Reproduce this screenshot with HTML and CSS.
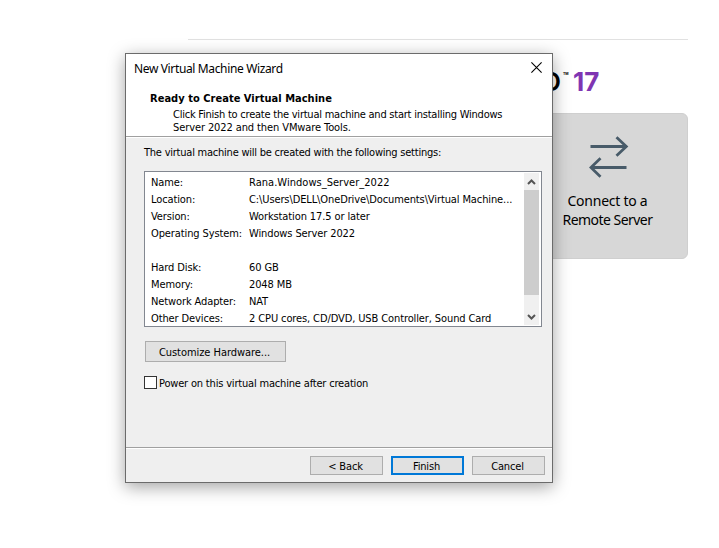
FILE: index.html
```
<!DOCTYPE html>
<html lang="en">
<head>
<meta charset="utf-8">
<title>New Virtual Machine Wizard</title>
<link rel="stylesheet" href="styles.css">
</head>
<body>
<main class="home">
  <div class="brand">
    <span class="brand-pro">O</span><span class="brand-tm">TM</span><span class="brand-version">17</span>
  </div>
  <div class="card">
    <svg class="card-icon" width="40" height="42" viewBox="0 0 40 42" fill="none" stroke="#485b69" stroke-width="2.8">
      <path d="M1.5 10.5H37.5M27.5 1.2L37.3 10.5L27.5 19.8M37.5 31.5H2M11.5 22.2L1.9 31.5L11.5 40.8"/>
    </svg>
    <span class="card-line">Connect to a</span>
    <span class="card-line remote">Remote Server</span>
  </div>
</main>

<section class="dialog">
  <header class="head">
    <div class="titlebar">
      <span class="title">New Virtual Machine Wizard</span>
      <svg class="close" width="11" height="11" viewBox="0 0 11 11" stroke="#000" stroke-width="1.1"><path d="M.4 .4L10.6 10.6M10.6 .4L.4 10.6"/></svg>
    </div>
    <h1>Ready to Create Virtual Machine</h1>
    <p><span class="tight">Click Finish to create the virtual machine and start installing Windows</span><br><span class="snug">Server 2022 and then VMware Tools.</span></p>
  </header>
  <div class="body">
    <div class="intro tight">The virtual machine will be created with the following settings:</div>
    <div class="list">
      <dl>
        <div><dt>Name:</dt><dd class="wide">Rana.Windows_Server_2022</dd></div>
        <div><dt>Location:</dt><dd>C:\Users\DELL\OneDrive\Documents\Virtual Machine...</dd></div>
        <div><dt>Version:</dt><dd>Workstation 17.5 or later</dd></div>
        <div><dt>Operating System:</dt><dd>Windows Server 2022</dd></div>
        <div class="gap"><dt>Hard Disk:</dt><dd>60 GB</dd></div>
        <div><dt>Memory:</dt><dd>2048 MB</dd></div>
        <div><dt>Network Adapter:</dt><dd>NAT</dd></div>
        <div><dt>Other Devices:</dt><dd>2 CPU cores, CD/DVD, USB Controller, Sound Card</dd></div>
      </dl>
      <div class="scroll">
        <svg width="15" height="17" viewBox="0 0 15 17" fill="none" stroke="#555" stroke-width="2"><path d="M4 11L7.5 7.5L11 11"/></svg>
        <div class="thumb"></div>
        <svg class="down" width="15" height="17" viewBox="0 0 15 17" fill="none" stroke="#555" stroke-width="2"><path d="M4 7L7.5 10.5L11 7"/></svg>
      </div>
    </div>
    <button class="btn customize">Customize Hardware...</button>
    <label class="check"><i class="box"></i><span>Power on this virtual machine after creation</span></label>
  </div>
  <footer class="foot">
    <button class="btn">&lt; Back</button>
    <button class="btn primary">Finish</button>
    <button class="btn">Cancel</button>
  </footer>
</section>
</body>
</html>
```
FILE: styles.css
```
* { box-sizing: border-box; }
body {
  margin: 0;
  height: 548px;
  overflow: hidden;
  background: #fff;
  color: #000;
  font: 11px/13px "DejaVu Sans Condensed", "DejaVu Sans", sans-serif;
}
h1, p, dl, dd { margin: 0; }
svg { display: block; }
.tight { letter-spacing: -.23px; }
.snug { letter-spacing: -.1px; }

.home {
  width: 500px;
  margin: 39px 0 0 188px;
  border-top: 1px solid #e1e1e1;
  display: flex;
  flex-direction: column;
  align-items: flex-end;
}
.brand {
  width: 147px;
  height: 73px;
  padding-top: 27px;
  display: flex;
  font-family: Inter, sans-serif;
  line-height: 30px;
}
.brand-pro { width: 21px; font-size: 26px; font-weight: 600; }
.brand-tm { width: 11px; padding-left: 1px; font-size: 3.5px; line-height: 14px; font-weight: 700; }
.brand-version { color: #7f35b2; font-size: 26px; font-weight: 700; }
.card {
  width: 160px;
  height: 146px;
  border: 1px solid #cfcfcf;
  border-radius: 6px;
  background: #d7d7d7;
  padding: 22px 1px 0 0;
  display: flex;
  flex-direction: column;
  align-items: center;
  font: 14px/19px "Noto Sans", sans-serif;
}
.card-icon { margin: 0 0 13px 2px; }
.card-line { letter-spacing: -.25px; }
.remote { letter-spacing: -.54px; }

.dialog {
  position: absolute;
  left: 125px;
  top: 53px;
  width: 428px;
  height: 430px;
  border: 1px solid #6b6b6b;
  background: #efefef;
  box-shadow: 0 4px 16px rgba(0, 0, 0, .36);
  display: flex;
  flex-direction: column;
  white-space: nowrap;
}
.head {
  height: 83px;
  flex: none;
  background: #fff;
  border-bottom: 1px solid #a0a0a0;
  box-shadow: 0 1px #fff;
}
.titlebar {
  height: 38px;
  padding: 6px 10px 0 8px;
  display: flex;
  justify-content: space-between;
  font: 12px/17px "Noto Sans", sans-serif;
}
.title { letter-spacing: -.36px; }
.close { margin-top: 2px; }
h1 { padding-left: 24px; font-size: 11px; line-height: 14px; font-weight: 700; letter-spacing: .03px; }
p { padding: 2px 0 0 47px; }
.body { flex: 1; padding: 8px 10px 0 18px; }
.intro { height: 26px; line-height: 15px; }
.list {
  width: 398px;
  height: 156px;
  border: 1px solid #828790;
  background: #fff;
  padding: 1px 2px 1px 0;
  display: flex;
  justify-content: space-between;
  overflow: hidden;
}
dl {
  padding: 1px 0 0 6px;
  line-height: 17px;
  letter-spacing: -.11px;
}
dl > div { display: grid; grid-template-columns: 98px 270px; }
dl > .gap { margin-top: 17px; }
.wide { letter-spacing: .03px; }
.scroll {
  width: 15px;
  background: #f0f0f0;
  display: flex;
  flex-direction: column;
}
.thumb { height: 105px; background: #cdcdcd; }
.down { margin-top: auto; }
.btn {
  width: 73px;
  height: 19px;
  border: 1px solid #adadad;
  background: #e1e1e1;
  color: #000;
  padding: 1px 2px 0 0;
  font: inherit;
  line-height: 15px;
  letter-spacing: -.15px;
}
.primary { border: 2px solid #0078d7; }
.customize { display: block; width: 141px; height: 21px; margin: 14px 0 0 1px; letter-spacing: -.05px; }
.check { display: flex; margin-top: 14px; line-height: 15px; letter-spacing: -.18px; }
.box { width: 13px; height: 13px; margin-right: 2px; border: 1px solid #333; background: #fff; }
.foot {
  height: 35px;
  flex: none;
  border-top: 1px solid #a0a0a0;
  box-shadow: inset 0 1px #fff;
  padding: 8px 7px 0 0;
  display: flex;
  justify-content: flex-end;
  gap: 8px;
}
```
